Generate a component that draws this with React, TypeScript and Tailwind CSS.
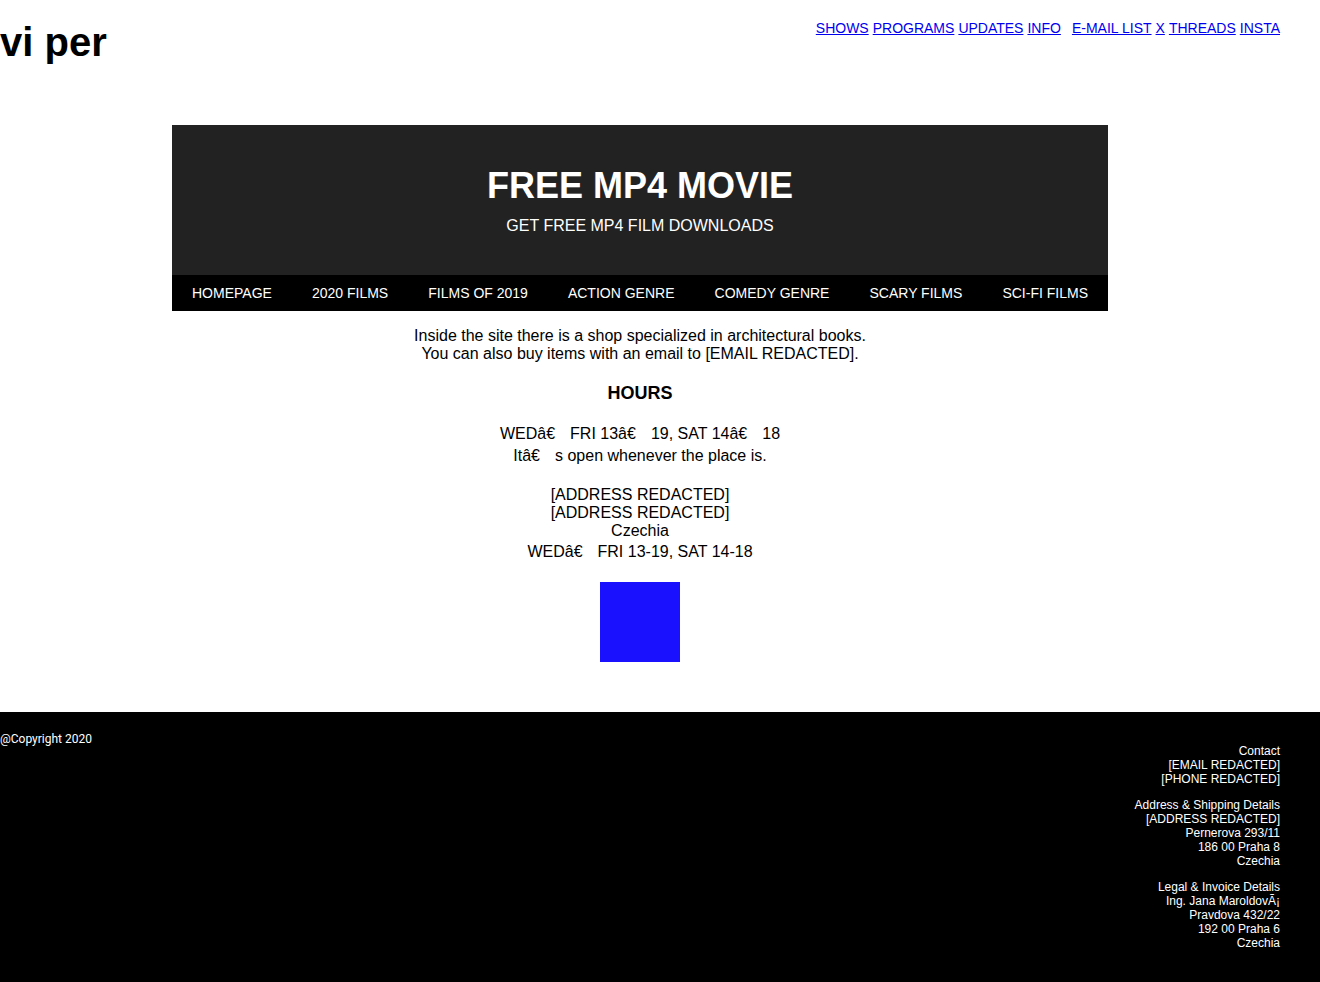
import React from "react";

const topLinks = ["SHOWS", "PROGRAMS", "UPDATES", "INFO"];
const socialLinks = ["E-MAIL LIST", "X", "THREADS", "INSTA"];
const menu = ["HOMEPAGE", "2020 FILMS", "FILMS OF 2019", "ACTION GENRE", "COMEDY GENRE", "SCARY FILMS", "SCI-FI FILMS"];

// broken-encoding dash: "â€" followed by a blank gap
const Gap = () => <span className="inline-block w-[15px]" />;

export default function App() {
  return (
    <div className="min-h-[982px] flex flex-col bg-white text-black" style={{ fontFamily: "'Liberation Sans', Arial, sans-serif" }}>
      {/* Header */}
      <header className="flex justify-between items-start pr-10">
        <h1 className="text-[40px] font-bold leading-[46px] mt-[19px]">vi per</h1>
        <nav className="mt-[19px] text-[14px] leading-[18px] flex gap-[4px]">
          {topLinks.map((l) => (
            <a key={l} href="#" className="text-[#0000ee] underline">{l}</a>
          ))}
          <span className="w-[3px]" />
          {socialLinks.map((l) => (
            <a key={l} href="#" className="text-[#0000ee] underline">{l}</a>
          ))}
        </nav>
      </header>

      <div className="pr-10">
        {/* Banner */}
        <div className="w-[936px] mx-auto mt-[60px]">
          <div className="bg-[#222222] h-[150px] flex flex-col items-center pt-[41px] text-white">
            <div className="text-[36px] font-bold leading-[40px]">FREE MP4 MOVIE</div>
            <div className="text-[16px] leading-[20px] mt-[10px]">GET FREE MP4 FILM DOWNLOADS</div>
          </div>
          <div className="bg-black h-[36px] flex items-center justify-between px-5 text-white text-[14px]">
            {menu.map((m) => (
              <span key={m}>{m}</span>
            ))}
          </div>
        </div>

        {/* Content */}
        <main className="text-center text-[16px] leading-[18px] mt-[16px]">
          <p>
            Inside the site there is a shop specialized in architectural books.
            <br />
            You can also buy items with an email to [EMAIL REDACTED].
          </p>
          <h2 className="text-[18px] font-bold leading-[22px] mt-[19px]">HOURS</h2>
          <p className="mt-[19px] leading-[22px]">
            WEDâ€<Gap />FRI 13â€<Gap />19, SAT 14â€<Gap />18
            <br />
            Itâ€<Gap />s open whenever the place is.
          </p>
          <p className="mt-[19px]">
            [ADDRESS REDACTED]
            <br />
            [ADDRESS REDACTED]
            <br />
            Czechia
          </p>
          <p className="mt-[3px]">WEDâ€<Gap />FRI 13-19, SAT 14-18</p>
          <div className="w-20 h-20 bg-[#1a12ff] mx-auto mt-[21px]" />
        </main>
      </div>

      {/* Footer */}
      <footer className="bg-black text-white text-[12px] mt-[50px] flex-1 flex justify-between pr-10 pt-[20px] pb-[30px]">
        <div className="leading-[14px]" style={{ fontFamily: "Roboto, 'Liberation Sans', sans-serif" }}>@Copyright 2020</div>
        <div className="text-right leading-[14px] mt-[12px] flex flex-col gap-[12px]">
          <p>
            Contact<br />[EMAIL REDACTED]<br />[PHONE REDACTED]
          </p>
          <p>
            Address &amp; Shipping Details<br />[ADDRESS REDACTED]<br />Pernerova 293/11<br />186 00 Praha 8<br />Czechia
          </p>
          <p>
            Legal &amp; Invoice Details<br />Ing. Jana MaroldovÃ¡<br />Pravdova 432/22<br />192 00 Praha 6<br />Czechia
          </p>
        </div>
      </footer>
    </div>
  );
}
